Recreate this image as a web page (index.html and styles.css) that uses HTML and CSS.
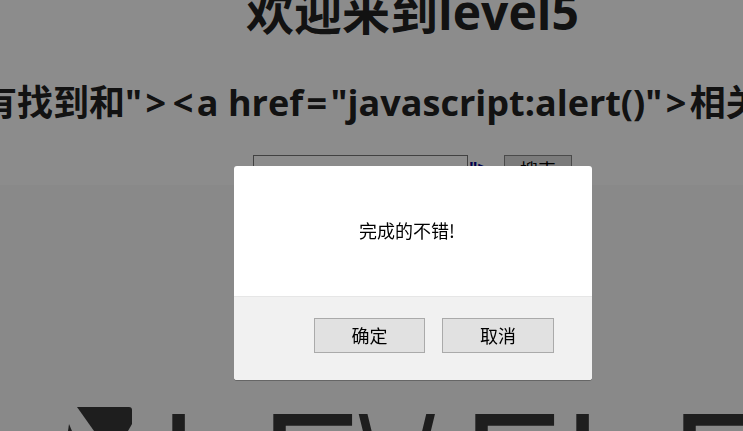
FILE: index.html
```html
<!DOCTYPE html>
<html lang="zh-CN">
<head>
    <meta charset="UTF-8">
    <meta name="viewport" content="width=device-width, initial-scale=1.0">
    <title>level5</title>
    <link rel="stylesheet" href="styles.css">
</head>
<body>

    <div class="page">
        <div class="top">
            <h1>欢迎来到level5</h1>
            <h2 class="result"><span>没有找到和"<span class="sym">&gt;</span><span class="sym">&lt;</span>a href<span class="sym">=</span>"javascript:alert()"<span class="sym">&gt;</span>相关的结果.</span></h2>
            <form class="search">
                <input class="keyword" type="text">
                <a class="echo" href="#">"&gt;</a>
                <button class="submit" type="button">搜索</button>
            </form>
        </div>
        <div class="logo">
            <svg class="logo-mark" width="70" height="24" viewBox="0 0 70 24">
                <path d="M9 0H61Q64 0 64 3V17L60 24H26Z" fill="#383838"/>
                <path d="M1 17L4 24H0Z" fill="#383838"/>
            </svg>
            <div class="logo-text">
                <span>L</span><span>E</span><span class="v">V</span><span>E</span><span>L</span><span class="last">E</span>
            </div>
        </div>
    </div>

    <div class="overlay"></div>

    <div class="dialog">
        <div class="dialog-body">完成的不错!</div>
        <div class="dialog-foot">
            <button class="dialog-btn" type="button">确定</button>
            <button class="dialog-btn" type="button">取消</button>
        </div>
    </div>

</body>
</html>
```

FILE: styles.css
```css
html, body {
    margin: 0;
    height: 100%;
    overflow: hidden;
}
body {
    font-family: "Liberation Sans", "Noto Sans CJK SC", sans-serif;
    background: #fafafa;
    color: #000;
}
/* the page is wider than the window, so its centre sits right of the window's */
.page {
    width: 825px;
    height: 431px;
    overflow: hidden;
}
.top {
    height: 185px;
    background: #fff;
    overflow: hidden;
}
h1 {
    margin: -18px 0 0;
    font-family: "Open Sans", "Noto Sans CJK SC", sans-serif;
    font-size: 48px;
    line-height: 60px;
    font-weight: 700;
    color: #222;
    text-align: center;
    white-space: nowrap;
}
.result {
    display: flex;
    justify-content: center;
    margin: 36px 0 0;
    font-family: "Open Sans", "Noto Sans CJK SC", sans-serif;
    font-size: 36px;
    line-height: 50px;
    font-weight: 700;
    color: #222;
    white-space: nowrap;
}
.sym {
    margin: 0 3.4px;
}
.search {
    display: flex;
    justify-content: center;
    align-items: flex-start;
    margin: 27px 0 0;
}
.keyword {
    box-sizing: border-box;
    width: 215px;
    height: 30px;
    margin: 0;
    border: 1px solid #777;
    background: #fff;
}
.echo {
    margin-left: 1px;
    padding-top: 4px;
    width: 35px;
    font-size: 18px;
    line-height: 20px;
    font-weight: 700;
    color: #00008b;
    text-decoration: none;
}
.submit {
    box-sizing: border-box;
    width: 68px;
    height: 26px;
    border: 1px solid #888;
    background: #e0e0e0;
    font-family: "Noto Sans CJK SC", sans-serif;
    font-size: 18px;
    padding: 0;
}
.logo {
    position: relative;
    height: 246px;
}
.logo-mark {
    position: absolute;
    left: 68px;
    top: 222px;
}
.logo-text {
    display: flex;
    margin: 0 0 0 155px;
    padding-top: 238px;
    font-family: "Inter", sans-serif;
    font-size: 184px;
    font-weight: 200;
    line-height: 120px;
    color: #383838;
    -webkit-text-stroke: 4px #383838;
}
.logo-text span {
    display: block;
    width: 101px;
}
.logo-text .v {
    transform: scaleX(0.66);
    transform-origin: left top;
}
.logo-text .last {
    margin-left: 6px;
}
.overlay {
    position: fixed;
    inset: 0;
    background: rgba(0, 0, 0, 0.45);
}
.dialog {
    position: absolute;
    left: 234px;
    top: 166px;
    width: 358px;
    height: 214px;
    border-radius: 3px;
    background: #fff;
    box-shadow: 0 1px 0 #666;
    overflow: hidden;
}
.dialog-body {
    height: 130px;
    box-sizing: border-box;
    padding: 50px 0 0 125px;
    font-family: "Noto Sans CJK SC", sans-serif;
    font-size: 18px;
    line-height: 28px;
}
.dialog-foot {
    display: flex;
    gap: 17px;
    height: 84px;
    box-sizing: border-box;
    padding: 21px 0 0 80px;
    border-top: 1px solid #e6e6e6;
    background: #f1f1f1;
}
.dialog-btn {
    box-sizing: border-box;
    width: 111px;
    height: 35px;
    padding: 0 0 2px;
    border: 1px solid #aaa;
    background: #e1e1e1;
    color: #000;
    font-family: "Noto Sans CJK SC", sans-serif;
    font-size: 18px;
}
.dialog-btn + .dialog-btn {
    width: 112px;
}
```
